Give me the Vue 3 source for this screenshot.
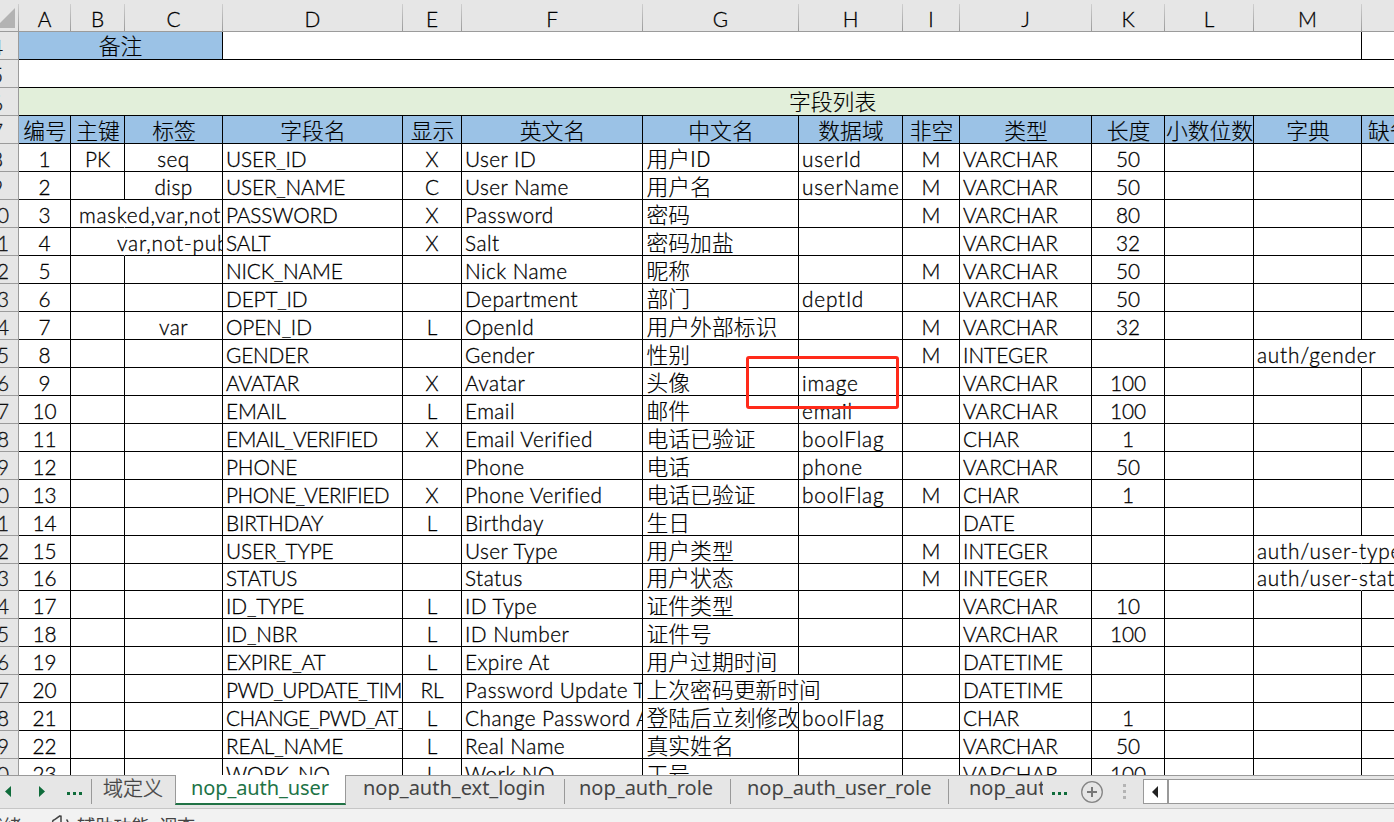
<script setup>
const columns = ['A', 'B', 'C', 'D', 'E', 'F', 'G', 'H', 'I', 'J', 'K', 'L', 'M', '']
const titles = ['编号', '主键', '标签', '字段名', '显示', '英文名', '中文名', '数据域', '非空', '类型', '长度', '小数位数', '字典', '缺省值']
const leftAligned = [3, 5, 6, 7, 9, 12]
const styles = { 2: 'mixed', 3: 'upper', 5: 'mixed', 6: 'zh', 7: 'mixed wide', 12: 'mixed wide' }

const source = [
  ['PK', 'seq', 'USER_ID', 'X', 'User ID', '用户ID', 'userId', 'M', 'VARCHAR', '50', ''],
  ['', 'disp', 'USER_NAME', 'C', 'User Name', '用户名', 'userName', 'M', 'VARCHAR', '50', ''],
  ['', 'masked,var,not-pub', 'PASSWORD', 'X', 'Password', '密码', '', 'M', 'VARCHAR', '80', ''],
  ['', 'var,not-pub', 'SALT', 'X', 'Salt', '密码加盐', '', '', 'VARCHAR', '32', ''],
  ['', '', 'NICK_NAME', '', 'Nick Name', '昵称', '', 'M', 'VARCHAR', '50', ''],
  ['', '', 'DEPT_ID', '', 'Department', '部门', 'deptId', '', 'VARCHAR', '50', ''],
  ['', 'var', 'OPEN_ID', 'L', 'OpenId', '用户外部标识', '', 'M', 'VARCHAR', '32', ''],
  ['', '', 'GENDER', '', 'Gender', '性别', '', 'M', 'INTEGER', '', 'auth/gender'],
  ['', '', 'AVATAR', 'X', 'Avatar', '头像', 'image', '', 'VARCHAR', '100', ''],
  ['', '', 'EMAIL', 'L', 'Email', '邮件', 'email', '', 'VARCHAR', '100', ''],
  ['', '', 'EMAIL_VERIFIED', 'X', 'Email Verified', '电话已验证', 'boolFlag', '', 'CHAR', '1', ''],
  ['', '', 'PHONE', '', 'Phone', '电话', 'phone', '', 'VARCHAR', '50', ''],
  ['', '', 'PHONE_VERIFIED', 'X', 'Phone Verified', '电话已验证', 'boolFlag', 'M', 'CHAR', '1', ''],
  ['', '', 'BIRTHDAY', 'L', 'Birthday', '生日', '', '', 'DATE', '', ''],
  ['', '', 'USER_TYPE', '', 'User Type', '用户类型', '', 'M', 'INTEGER', '', 'auth/user-type'],
  ['', '', 'STATUS', '', 'Status', '用户状态', '', 'M', 'INTEGER', '', 'auth/user-status'],
  ['', '', 'ID_TYPE', 'L', 'ID Type', '证件类型', '', '', 'VARCHAR', '10', ''],
  ['', '', 'ID_NBR', 'L', 'ID Number', '证件号', '', '', 'VARCHAR', '100', ''],
  ['', '', 'EXPIRE_AT', 'L', 'Expire At', '用户过期时间', '', '', 'DATETIME', '', ''],
  ['', '', 'PWD_UPDATE_TIME', 'RL', 'Password Update Time', '上次密码更新时间', '', '', 'DATETIME', '', ''],
  ['', '', 'CHANGE_PWD_AT_LOGIN', 'L', 'Change Password At', '登陆后立刻修改', 'boolFlag', '', 'CHAR', '1', ''],
  ['', '', 'REAL_NAME', 'L', 'Real Name', '真实姓名', '', '', 'VARCHAR', '50', ''],
  ['', '', 'WORK_NO', 'L', 'Work NO', '工号', '', '', 'VARCHAR', '100', ''],
]

// Text that runs past its own cell hides the border next to it.
const spills = { '2-1': 'open', '2-2': 'spill spill-masked', '3-1': 'open', '3-2': 'spill spill-var', '7-12': 'open', '14-12': 'open', '15-12': 'open', '19-6': 'open' }

const rows = source.map((r, i) => ({
  no: i + 8,
  short: i === 15,
  cells: [String(i + 1), ...r.slice(0, 10), '', r[10], ''].map((text, c) => ({
    text,
    cls: [leftAligned.includes(c) ? 'left' : 'center', styles[c] || '', c === 3 && text.length > 13 ? 'tight' : '', spills[`${i}-${c}`] || ''],
  })),
}))

const tabs = [
  { name: '域定义', cls: 't0' },
  { name: 'nop_auth_user', cls: 't1 active' },
  { name: 'nop_auth_ext_login', cls: 't2' },
  { name: 'nop_auth_role', cls: 't3' },
  { name: 'nop_auth_user_role', cls: 't4' },
  { name: 'nop_auth_dept', cls: 't5' },
]
</script>

<template>
  <div class="app">
    <div class="sheet">
      <div class="row head">
        <div class="corner"><svg width="15" height="20" viewBox="0 0 15 20"><path d="M15 0V20H-5Z" fill="#b3b3b3" /></svg></div>
        <div v-for="(c, i) in columns" :key="i" class="col">{{ c }}</div>
      </div>
      <div class="row merged note">
        <div class="rn"><span>4</span></div>
        <div class="cell blue center zh">备注</div>
        <div class="cell"></div>
        <div class="cell open"></div>
      </div>
      <div class="row merged full">
        <div class="rn"><span>5</span></div>
        <div class="cell open"></div>
      </div>
      <div class="row merged full green">
        <div class="rn"><span>6</span></div>
        <div class="cell open zh"><span class="caption">字段列表</span></div>
      </div>
      <div class="row titles">
        <div class="rn"><span>7</span></div>
        <div v-for="(t, i) in titles" :key="t" class="cell blue center zh" :class="{ last: i === 13 }"><span>{{ t }}</span></div>
      </div>
      <div v-for="r in rows" :key="r.no" class="row" :class="{ short: r.short }">
        <div class="rn"><span>{{ r.no }}</span></div>
        <div v-for="(c, i) in r.cells" :key="i" class="cell" :class="c.cls"><span>{{ c.text }}</span></div>
      </div>
      <div class="marker"></div>
    </div>

    <div class="tabbar">
      <div class="nav">
        <svg width="91" height="29" viewBox="0 0 91 29">
          <path d="M11 10V21L5 15.500Z M39 10V21L45 15.500Z M67 16h3v3h-3Z M73 16h3v3h-3Z M79 16h3v3h-3Z" fill="#0f6c3b" />
        </svg>
      </div>
      <div v-for="t in tabs" :key="t.name" class="tab" :class="t.cls"><span>{{ t.name }}</span></div>
      <svg class="tools" width="100" height="32" viewBox="0 0 100 32">
        <path d="M9 16h3v3h-3Z M15 16h3v3h-3Z M21 16h3v3h-3Z" fill="#0f6c3b" />
        <circle cx="49" cy="16" r="10.3" fill="none" stroke="#858585" stroke-width="1.3" />
        <path d="M49 11V21M44 16H54" stroke="#777" stroke-width="2" />
        <path d="M80 8h3v3h-3Z M80 14h3v3h-3Z M80 20h3v3h-3Z" fill="#b4b4b4" />
      </svg>
      <div class="scroll">
        <div class="arrow"><svg width="6" height="12" viewBox="0 0 6 12"><path d="M6 0V12L0 6Z" fill="#222" /></svg></div>
      </div>
    </div>
    <div class="status">
      <span class="ready">就绪</span>
      <svg width="20" height="20" viewBox="0 0 20 20" fill="none" stroke="#444" stroke-width="1.5">
        <path d="M9.500 0.500C6 2.500 5.500 4 2 5.500C1 8 2 12 4 14M10 0.500V9M15.500 4.500C17 6 17.500 9 17 12" />
      </svg>
      <span class="access">辅助功能: 调查</span>
    </div>
  </div>
</template>

<style>
html,
body {
  overflow: hidden;
}
</style>

<style scoped>
.app {
  width: 1394px;
  height: 822px;
  overflow: hidden;
  background: #fff;
  display: flex;
  flex-direction: column;
  font-family: Lato, 'Noto Sans CJK SC', sans-serif;
  font-size: 20.8px;
  font-weight: 300;
  font-variant-ligatures: none;
  color: #000;
}
.sheet {
  height: 775px;
  flex: none;
  overflow: hidden;
  position: relative;
  -webkit-text-stroke: 0.3px #000;
}
.row {
  display: grid;
  grid-template-columns: 19px 52px 54px 98px 180px 59px 181px 156px 104px 57px 132px 73px 89px 108px 100px;
  grid-template-rows: 100%;
  height: 28px;
  width: 1462px;
}
.row.short {
  height: 27px;
}
.row.short .cell,
.row.short .rn {
  line-height: 28px;
}
.row.head {
  height: 32px;
  box-sizing: border-box;
  border-bottom: 1px solid #9b9b9b;
  background: #e6e6e6;
}
.col {
  position: relative;
  text-align: center;
  line-height: 37px;
  padding-right: 1px;
}
.col::after,
.corner::after {
  content: '';
  position: absolute;
  right: 0;
  top: 4px;
  height: 27px;
  width: 1px;
  background: linear-gradient(#cfcfcf, #9b9b9b);
}
.corner {
  position: relative;
  padding-top: 8px;
}
.corner svg {
  display: block;
}
.rn {
  box-sizing: border-box;
  min-width: 0;
  overflow: hidden;
  background: #e6e6e6;
  border-right: 1px solid #9b9b9b;
  border-bottom: 1px solid #9b9b9b;
  line-height: 30px;
  color: #222;
}
.rn span {
  display: block;
  width: 40px;
  margin-left: -23px;
  text-align: center;
}
.cell {
  box-sizing: border-box;
  min-width: 0;
  overflow: hidden;
  white-space: nowrap;
  border-right: 1px solid #000;
  border-bottom: 1px solid #000;
  line-height: 30px;
}
.cell.center {
  display: flex;
  justify-content: center;
}
.cell.left {
  padding-left: 3px;
}
.cell.open {
  overflow: visible;
  border-right-color: transparent;
}
.mixed {
  letter-spacing: 0.45px;
}
.mixed.wide {
  letter-spacing: 0.8px;
}
.upper {
  letter-spacing: -0.15px;
}
.upper.tight {
  letter-spacing: -0.5px;
}
.cell.zh {
  font-family: 'Noto Sans CJK SC', sans-serif;
  font-size: 21.8px;
  font-weight: 300;
  line-height: 27px;
  -webkit-text-stroke-width: 0.15px;
}
.cell.zh.left {
  padding-left: 3.5px;
}
.merged .cell.zh {
  line-height: 25px;
}
.titles .cell.zh {
  line-height: 27px;
}
.row.short .cell.zh {
  line-height: 25px;
}
.titles .cell.center {
  padding-left: 1px;
}
.blue {
  background: #9bc2e6;
}
.green .cell {
  background: #e2efda;
}
.merged.note {
  grid-template-columns: 19px 204px 1139px 100px;
}
.merged.full {
  grid-template-columns: 19px 1443px;
}
.caption {
  margin-left: 770px;
}
.titles .cell.last {
  justify-content: flex-start;
  padding-left: 6px;
}
.cell.spill {
  overflow: visible;
  justify-content: flex-end;
}
.spill span {
  flex: none;
  overflow: hidden;
  height: 27px;
}
.spill-masked {
  letter-spacing: 0.7px;
}
.spill-masked span {
  width: 143px;
}
.spill-var {
  letter-spacing: 0.8px;
}
.spill-var span {
  width: 105px;
}
.marker {
  position: absolute;
  left: 746px;
  top: 356px;
  width: 147px;
  height: 47px;
  border: 3px solid #ff2a1a;
  border-radius: 3px;
}
.tabbar {
  height: 33px;
  flex: none;
  display: flex;
  background: #e6e6e6;
  font-family: 'Noto Sans', 'Noto Sans CJK SC', sans-serif;
  font-size: 20px;
  font-weight: 400;
  color: #444;
}
.tabbar > * {
  box-sizing: border-box;
  flex: none;
  border-top: 1px solid #999;
}
.nav {
  width: 91px;
}
.nav svg {
  display: block;
}
.tab {
  height: 33px;
  position: relative;
  line-height: 24px;
  white-space: nowrap;
  overflow: hidden;
}
.tab::before {
  content: '';
  position: absolute;
  left: 0;
  top: 3px;
  width: 1px;
  height: 25px;
  background: #999;
}
.t0 {
  width: 84px;
  padding-left: 12px;
  font-weight: 300;
  line-height: 25px;
  -webkit-text-stroke: 0.3px #444;
}
.tab.active {
  width: 171px;
  height: 30px;
  padding-left: 15px;
  border-top: 0;
  line-height: 26px;
  border-left: 1px solid #999;
  border-right: 1px solid #999;
  border-bottom: 2px solid #217346;
  background: #fff;
  color: #217346;
  letter-spacing: -0.1px;
}
.active::before,
.t2::before {
  display: none;
}
.t2 {
  width: 218px;
  padding-left: 17px;
}
.t3 {
  width: 166px;
  padding-left: 15px;
}
.t4 {
  width: 218px;
  padding-left: 17px;
}
.t5 {
  width: 95px;
  padding-left: 21px;
}
.tools {
  height: 33px;
}
.tabbar .scroll {
  flex: 1;
  padding-top: 3px;
}
.arrow {
  box-sizing: border-box;
  height: 25px;
  border: 1px solid #999;
  border-right: 0;
  background: linear-gradient(to right, #fff 23px, #999 23px, #999 25px, #fff 25px);
  padding: 6px 0 0 8px;
}
.arrow svg {
  display: block;
}
.status {
  flex: 1;
  display: flex;
  box-sizing: border-box;
  border-top: 1px solid #c6c6c6;
  background: #f2f2f2;
  overflow: hidden;
  font-family: 'Noto Sans CJK SC', sans-serif;
  font-size: 18.2px;
  font-weight: 400;
  line-height: 32px;
  color: #444;
  white-space: nowrap;
}
.ready {
  flex: none;
  margin-left: -15px;
  width: 66px;
}
.status svg {
  flex: none;
  margin: 6px 6px 0 0;
}
</style>
